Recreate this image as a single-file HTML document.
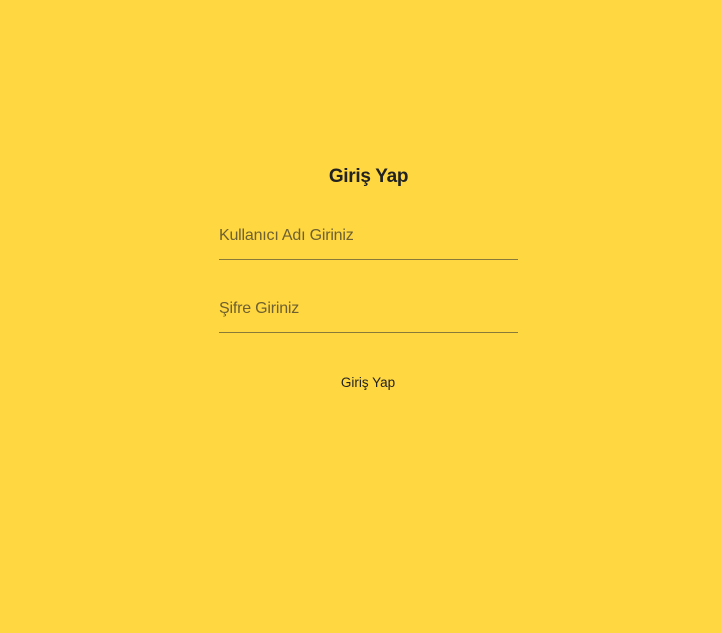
<!DOCTYPE html>
<html><head><style>
html,body{margin:0;width:721px;height:633px;background:#FFD740;font-family:"Liberation Sans",sans-serif;overflow:hidden}
.a{position:absolute}
.t{left:0;width:737px;text-align:center;top:166px;font-size:19px;font-weight:bold;color:#222;letter-spacing:-0.3px}
.p{left:219px;font-size:16px;color:#6e6030;letter-spacing:-0.2px}
.l{left:219px;width:299px;height:1px;background:#8a7a3a}
.b{left:0;width:736px;text-align:center;top:375px;font-size:13.5px;color:#222}
</style></head><body>
<div class="a t">Giriş Yap</div>
<div class="a p" style="top:227px">Kullanıcı Adı Giriniz</div>
<div class="a l" style="top:259px"></div>
<div class="a p" style="top:300px">Şifre Giriniz</div>
<div class="a l" style="top:332px"></div>
<div class="a b">Giriş Yap</div>
</body></html>
